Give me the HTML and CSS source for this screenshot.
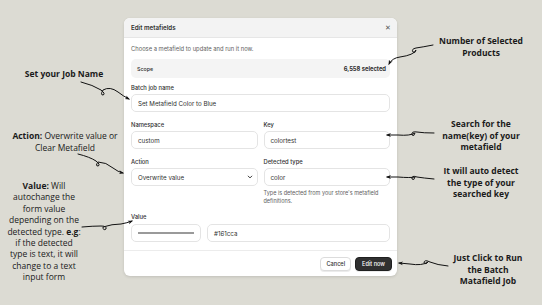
FILE: index.html
```html
<!DOCTYPE html>
<html>
<head>
<meta charset="utf-8">
<link rel="stylesheet" href="styles.css">
</head>
<body>
<div class="stage">
  <div class="modal">
    <div class="modal-head">
      <span class="modal-title">Edit metafields</span>
      <span class="close">&#x2715;</span>
    </div>
    <div class="modal-body">
      <p class="desc">Choose a metafield to update and run it now.</p>
      <div class="scope">
        <span class="scope-label">Scope</span>
        <span class="scope-count">6,558 selected</span>
      </div>
      <div class="field">
        <label class="lbl">Batch job name</label>
        <div class="input">Set Metafield Color to Blue</div>
      </div>
      <div class="grid">
        <div class="field">
          <label class="lbl">Namespace</label>
          <div class="input">custom</div>
        </div>
        <div class="field">
          <label class="lbl">Key</label>
          <div class="input">colortest</div>
        </div>
        <div class="field">
          <label class="lbl">Action</label>
          <div class="input select">Overwrite value
            <svg class="chev" viewBox="0 0 10 10" width="6" height="6"><path d="M2 3.5 L5 6.5 L8 3.5" fill="none" stroke="#303030" stroke-width="1.6" stroke-linecap="round" stroke-linejoin="round"/></svg>
          </div>
        </div>
        <div class="field">
          <label class="lbl">Detected type</label>
          <div class="input">color</div>
          <p class="help">Type is detected from your store's metafield definitions.</p>
        </div>
      </div>
      <div class="field value-field">
        <label class="lbl">Value</label>
        <div class="value-row">
          <div class="input swatch"><span class="swatch-line"></span></div>
          <div class="input grow">#161cca</div>
        </div>
      </div>
    </div>
    <div class="modal-foot">
      <button class="btn">Cancel</button>
      <button class="btn primary">Edit now</button>
    </div>
  </div>

  <div class="note left n-job"><b>Set your Job Name</b></div>
  <div class="note left n-action"><b>Action:</b> Overwrite value or<br>Clear Metafield</div>
  <div class="note left n-value"><b>Value:</b> Will<br>autochange the<br>form value<br>depending on the<br>detected type. <b>e.g</b>:<br>if the detected<br>type is text, it will<br>change to a text<br>input form</div>

  <div class="note right n-scope"><b>Number of Selected<br>Products</b></div>
  <div class="note right n-key"><b>Search for the<br>name(key) of your<br>metafield</b></div>
  <div class="note right n-type"><b>It will auto detect<br>the type of your<br>searched key</b></div>
  <div class="note right n-run"><b>Just Click to Run<br>the Batch<br>Matafield Job</b></div>

  <svg class="arrows" width="542" height="305" viewBox="0 0 542 305">
    <defs>
      <marker id="ah" viewBox="0 0 10 10" refX="8" refY="5" markerWidth="5" markerHeight="5" orient="auto-start-reverse">
        <path d="M0 1 L10 5 L0 9 L3 5 Z" fill="#111"/>
      </marker>
    </defs>
    <g fill="none" stroke="#111" stroke-width="1" stroke-linecap="round">
      <path d="M81 82 Q93 85 101 90 Q106 94 103 95 Q100 95 103 90 Q110 86 118 92 Q123 96 129 99" marker-end="url(#ah)"/>
      <path d="M433 45 Q423 47 416 48 Q411 49 413 52 Q415 54 416 50 Q414 55 400 57 Q392 58 389 64" marker-end="url(#ah)"/>
      <path d="M434 133 Q423 133 417 132 Q411 131 412 135 Q414 137 415 133 Q410 136 398 135 L387 135" marker-end="url(#ah)"/>
      <path d="M434 179 Q423 178 417 177 Q411 175 412 179 Q414 181 415 177 Q410 178 398 177 L387 177" marker-end="url(#ah)"/>
      <path d="M448 266 Q437 265 430 262 Q424 259 424 263 Q426 265 428 262 Q422 266 410 264 L399 263" marker-end="url(#ah)"/>
      <path d="M78 154 Q90 157 96 161 Q101 165 98 166 Q95 166 98 162 Q106 162 113 168 Q118 172 123 173" marker-end="url(#ah)"/>
      <path d="M82 227 Q93 226 101 226 Q107 226 106 229 Q103 231 103 227 Q112 224 121 224 Q127 223 132 221" marker-end="url(#ah)"/>
    </g>
  </svg>
</div>
</body>
</html>
```

FILE: styles.css
```css
* { box-sizing: border-box; margin: 0; padding: 0; }
html, body { width: 542px; height: 305px; overflow: hidden; }
body {
  background: #dcdbd3;
  font-family: Inter, "Liberation Sans", sans-serif;
  color: #303030;
}
.stage { position: relative; width: 542px; height: 305px; padding-top: 18px; }

.modal {
  width: 273px;
  margin-left: 124px;
  background: #fff;
  border-radius: 6px;
  overflow: hidden;
  box-shadow: 0 1px 3px rgba(0,0,0,0.12);
}
.modal-head {
  height: 20px;
  background: #f3f3f3;
  border-bottom: 1px solid #e6e6e6;
  display: flex;
  align-items: center;
  justify-content: space-between;
  padding: 0 6px 0 7px;
}
.modal-title { font-size: 6.2px; font-weight: 600; color: #303030; }
.close { font-size: 6.5px; color: #555; }

.modal-body { padding: 7px 7px 0 7px; }
.desc { font-size: 5.8px; color: #616161; line-height: 8px; }
.scope {
  margin-top: 6px;
  height: 19px;
  background: #f4f4f4;
  border-radius: 5px;
  display: flex;
  align-items: center;
  justify-content: space-between;
  padding: 0 4px 0 6px;
}
.scope-label { font-size: 5.3px; font-weight: 500; color: #303030; }
.scope-count { font-size: 5.8px; font-weight: 700; color: #303030; }

.field { display: flex; flex-direction: column; }
.modal-body > .field { margin-top: 6px; }
.lbl { font-size: 5.8px; font-weight: 500; color: #303030; line-height: 8px; margin-bottom: 2px; }
.input {
  height: 18px;
  border: 1px solid #e4e4e4;
  border-radius: 5px;
  display: flex;
  align-items: center;
  padding: 0 6px;
  font-size: 6.2px;
  color: #303030;
  background: #fff;
}
.select { justify-content: space-between; padding-right: 4px; }
.chev { display: block; }
.grid {
  margin-top: 9px;
  display: grid;
  grid-template-columns: 1fr 1fr;
  column-gap: 6px;
  row-gap: 9px;
}
.help { font-size: 5.5px; color: #616161; line-height: 8px; margin-top: 3px; }

.modal-body > .value-field { margin-top: 8px; }
.value-row { display: flex; gap: 6px; margin-top: 1px; }
.swatch { width: 70px; justify-content: center; }
.swatch-line { display: block; width: 58px; height: 1.5px; background: #9a9a9a; }
.grow { flex: 1; }

.modal-foot {
  margin-top: 8px;
  border-top: 1px solid #ececec;
  height: 26px;
  display: flex;
  align-items: center;
  justify-content: flex-end;
  gap: 4px;
  padding: 0 5px;
}
.btn {
  height: 14px;
  border-radius: 4px;
  border: 1px solid #dcdcdc;
  background: #fff;
  font-family: Inter, "Liberation Sans", sans-serif;
  font-size: 5.6px;
  font-weight: 500;
  color: #303030;
  padding: 0 5px;
  box-shadow: 0 1px 0 rgba(0,0,0,0.08);
}
.primary { background: #303030; color: #fff; border-color: #1f1f1f; padding: 0 6px; }

.note {
  position: absolute;
  font-family: "Open Sans", "Liberation Sans", sans-serif;
  font-size: 8.5px;
  line-height: 11.6px;
  color: #1a1a1a;
  text-align: center;
  white-space: nowrap;
}
.note b { font-weight: 700; }
.n-job { left: 4px; width: 120px; top: 68px; }
.n-action { left: 5px; width: 120px; top: 130px; }
.n-value { left: -16px; width: 120px; top: 180px; line-height: 11.4px; }
.n-scope { left: 421px; width: 120px; top: 35px; }
.n-key { left: 421px; width: 120px; top: 118px; }
.n-type { left: 421px; width: 120px; top: 165px; }
.n-run { left: 428px; width: 120px; top: 252px; }

.arrows { position: absolute; left: 0; top: 0; pointer-events: none; }
```
